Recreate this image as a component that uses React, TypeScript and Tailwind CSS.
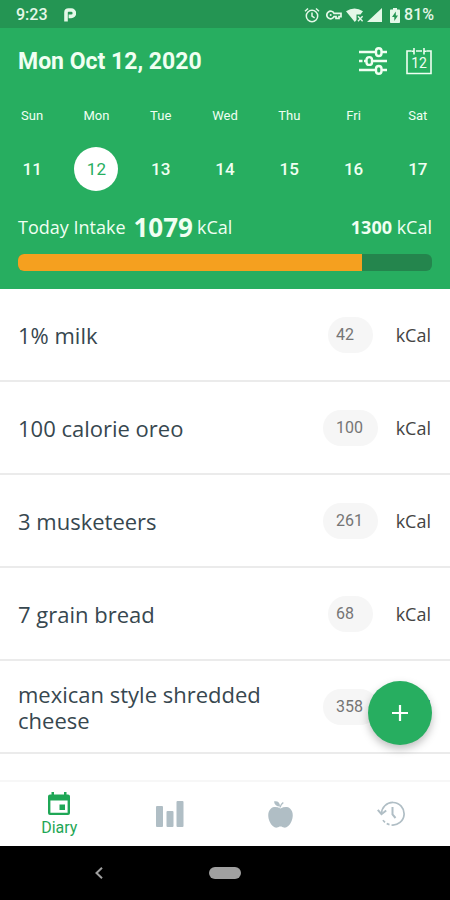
import React from "react";

const week = [
  { day: "Sun", date: 11 },
  { day: "Mon", date: 12 },
  { day: "Tue", date: 13 },
  { day: "Wed", date: 14 },
  { day: "Thu", date: 15 },
  { day: "Fri", date: 16 },
  { day: "Sat", date: 17 },
];

const foods = [
  { name: "1% milk", kcal: 42 },
  { name: "100 calorie oreo", kcal: 100 },
  { name: "3 musketeers", kcal: 261 },
  { name: "7 grain bread", kcal: 68 },
  { name: "mexican style shredded cheese", kcal: 358 },
];

function StatusBar() {
  return (
    <div className="flex h-7 items-center bg-[#249553] px-4 pt-0.5 text-base font-medium text-[#e4f8e8]">
      <span>9:23</span>
      <svg className="ml-4" width="12" height="14" viewBox="0 0 12 14" fill="none" stroke="currentColor">
        <path d="M2 13.5V4.5Q2 2 4.5 2H7.2a3 3 0 0 1 0 6.4H4.6" strokeWidth="3.6" />
      </svg>
      <div className="ml-auto flex items-center">
        <svg width="16" height="16" viewBox="0 0 16 16" fill="none" stroke="currentColor" strokeWidth="1.5">
          <circle cx="8" cy="9" r="5.7" />
          <path d="M8 5.5V9.2l2.6 1.6M1 4.2l3-2.7M15 4.2l-3-2.7" />
        </svg>
        <svg className="ml-1.5" width="16" height="10" viewBox="0 0 16 10" fill="none" stroke="currentColor" strokeWidth="1.7">
          <path d="M8 3.3A3.8 3.8 0 1 0 8 6.7h2v1.7h3V6.7h2V3.3z" />
          <circle cx="4.7" cy="5" r="1" fill="currentColor" stroke="none" />
        </svg>
        <svg className="ml-1" width="19" height="15" viewBox="0 0 19 15">
          <path d="M0 3.2Q8.5-2 17 3.2L14.5 6.5H10.5V12L8.8 14z" fill="currentColor" />
          <path d="M12 8.2l4.6 5M16.6 8.2l-4.6 5" stroke="currentColor" strokeWidth="1.4" />
        </svg>
        <svg className="ml-0.5" width="15" height="14" viewBox="0 0 15 14" fill="currentColor">
          <path d="M15 0v14H0z" />
        </svg>
        <svg className="ml-2" width="10" height="15" viewBox="0 0 10 15">
          <path d="M3 0h4v1.6h2.2q.8 0 .8.8v11.8q0 .8-.8.8H.8q-.8 0-.8-.8V2.4q0-.8.8-.8H3z" fill="currentColor" />
          <path d="M5.800 3.5L2 9h2.300v4L8 7.5H5.800z" fill="#249553" />
        </svg>
        <span className="ml-1">81%</span>
      </div>
    </div>
  );
}

function SlidersIcon() {
  return (
    <svg width="28" height="28" viewBox="0 0 28 28" fill="none" stroke="currentColor" strokeWidth="2.4">
      <path d="M0 5h16.500M23 5h5M0 14h3.500M5 14h2M14 14h14M0 23h16.500M23 23h5" />
      <rect x="17" y="1.2" width="5.500" height="7.800" rx="2.700" />
      <rect x="7.500" y="10.100" width="5.500" height="7.800" rx="2.700" />
      <rect x="17" y="19" width="5.500" height="7.800" rx="2.700" />
    </svg>
  );
}

function CalendarButton() {
  return (
    <button type="button" aria-label="Pick a date" className="relative h-7 w-[26px]">
      <svg width="26" height="28" viewBox="0 0 26 28" fill="none" stroke="currentColor" strokeWidth="1.600">
        <path d="M5.500 4H1v22.500h24V4h-4.500M10 4h6" />
        <path d="M8 1v6.500M18 1v6.500M5.500 4.200H8M18 4.200h2.500" />
      </svg>
      <span className="absolute inset-x-0 top-2 text-center text-sm leading-4">12</span>
    </button>
  );
}

function Header() {
  return (
    <header className="bg-[#27ae60] pb-[18px] text-[#f0fff2]">
      <div className="flex h-[66px] items-center px-[18px]">
        <h1 className="pt-0.5 text-[23px] font-bold">Mon Oct 12, 2020</h1>
        <button type="button" aria-label="Filters" className="mr-[19px] ml-auto">
          <SlidersIcon />
        </button>
        <CalendarButton />
      </div>
      <div className="grid grid-cols-7 pt-3">
        {week.map((d) => (
          <button key={d.day} type="button" className="flex flex-col items-center">
            <span className="text-[13px] leading-5">{d.day}</span>
            <span
              className={
                d.date === 12
                  ? "mt-[21px] flex size-11 items-center justify-center rounded-full bg-white pt-0.5 text-[17px] text-[#27ae60]"
                  : "mt-[21px] flex size-11 items-center justify-center pt-0.5 text-[17px] font-medium"
              }
            >
              {d.date}
            </span>
          </button>
        ))}
      </div>
      <div className="mt-[18px] flex h-9 items-center px-[18px] font-['Open_Sans',sans-serif] text-lg leading-9">
        <span>Today Intake</span>
        <strong className="ml-2 text-[26px]">1079</strong>
        <span className="ml-1">kCal</span>
        <span className="ml-auto">
          <strong>1300</strong> kCal
        </span>
      </div>
      <div className="mx-[18px] mt-[9px] h-[17px] overflow-hidden rounded-md bg-[#24854d]">
        <div className="h-full bg-[#f5a01f]" style={{ width: `${(1079 / 1300) * 100}%` }} />
      </div>
    </header>
  );
}

function FoodRow({ name, kcal }: { name: string; kcal: number }) {
  const id = `kcal-${kcal}`;
  return (
    <li className="flex h-[93px] items-center border-b-2 border-[#ebebeb] px-[18px]">
      <label htmlFor={id} className="flex-1 pr-12 text-[22px] leading-[26px] text-[#37474f]">
        {name}
      </label>
      <div className="flex w-[55px] justify-center">
        <input
          id={id}
          defaultValue={kcal}
          inputMode="numeric"
          className={
            kcal < 100
              ? "h-9 w-[45px] rounded-full bg-[#f6f6f6] pl-2 font-[Roboto,sans-serif] text-base text-[#757575]"
              : "h-9 w-[55px] rounded-full bg-[#f6f6f6] pl-[13px] font-[Roboto,sans-serif] text-base text-[#757575]"
          }
        />
      </div>
      <span className="w-[54px] pr-px text-right text-lg text-[#444]">kCal</span>
    </li>
  );
}

function TabBar() {
  return (
    <nav className="relative grid h-[66px] grid-cols-4 border-t-2 border-[#f7f7f7] bg-white px-1 text-[#b0bec5]">
      <button type="button" className="flex flex-col items-center pt-2.5 text-[#1fa756]">
        <svg width="22" height="24" viewBox="0 0 22 24">
          <path
            fillRule="evenodd"
            fill="currentColor"
            d="M3.500 0H6v2.500h10V0h2.500v2.500H20q2 0 2 2V21q0 2-2 2H2q-2 0-2-2V4.500q0-2 2-2h1.500zM2.400 8.500v12.200h17.200V8.500zM11.500 12.500H17V18h-5.500z"
          />
        </svg>
        <span className="text-base leading-6">Diary</span>
      </button>
      <button type="button" aria-label="Statistics" className="flex items-center justify-center">
        <svg width="28" height="26" viewBox="0 0 28 26" fill="currentColor">
          <rect x="0" y="5" width="7" height="21" rx="1" />
          <rect x="10.500" y="10" width="7" height="16" rx="1" />
          <rect x="20.500" y="0" width="7" height="26" rx="1" />
        </svg>
      </button>
      <button type="button" aria-label="Foods" className="flex items-center justify-center">
        <svg width="25" height="27" viewBox="0 0 25 27" fill="currentColor">
          <path d="M12.500 7.500C9 5.800 5.500 5.500 3 7.500C-.5 10.500-.3 16 1.600 20.500C3.500 25 6.500 27 9 26.600C10.500 26.300 11 25.600 12.500 25.600S14.500 26.300 16 26.600C18.500 27 21.500 25 23.400 20.500C25.300 16 25.500 10.500 22 7.500C19.500 5.500 16 5.800 12.500 7.500Z" />
          <path d="M6 .5C9.500-.3 12 1.500 12 5.500C8.500 5.500 6.500 4 6 .5Z" />
          <path d="M12 6.500Q12.500 3.500 15.300 1.500" fill="none" stroke="currentColor" strokeWidth="1.500" />
        </svg>
      </button>
      <button type="button" aria-label="History" className="flex items-center justify-center">
        <svg width="28" height="26" viewBox="0 0 28 26" fill="none" stroke="currentColor" strokeWidth="1.700">
          <path d="M4.500 13A11.300 11.300 0 1 1 14.500 24" />
          <path d="M12.500 23.600A11.300 11.300 0 0 1 5 17.500" strokeDasharray="3 2" />
          <path d="M.8 8.800L4.500 13.200L9.200 9.500" strokeWidth="2" />
          <path d="M15.500 6v7.500l3 3.500" strokeWidth="2" />
        </svg>
      </button>
    </nav>
  );
}

function SystemBar() {
  return (
    <div className="grid h-[54px] grid-cols-[1fr_32px_1fr] items-center bg-black text-[#a0a0a0]">
      <button type="button" aria-label="Back" className="flex justify-center pr-3">
        <svg width="8" height="12" viewBox="0 0 8 12" fill="none" stroke="currentColor" strokeWidth="2">
          <path d="M7 .8L1.500 6L7 11.200" />
        </svg>
      </button>
      <button type="button" aria-label="Home" className="h-3 w-8 rounded-full bg-[#a0a0a0]" />
    </div>
  );
}

export default function App() {
  return (
    <div className="flex min-h-screen flex-col bg-white font-[Roboto,sans-serif]">
      <StatusBar />
      <Header />
      <main className="relative flex-1 font-['Open_Sans',sans-serif]">
        <ul>
          {foods.map((f) => (
            <FoodRow key={f.name} name={f.name} kcal={f.kcal} />
          ))}
        </ul>
        <button
          type="button"
          aria-label="Add food"
          className="absolute right-[18px] bottom-[35px] flex size-16 items-center justify-center rounded-full bg-[#27ae60] text-white shadow-[0_4px_8px_rgba(0,0,0,0.25)]"
        >
          <svg width="16" height="16" viewBox="0 0 16 16" stroke="currentColor" strokeWidth="2.200">
            <path d="M8 0v16M0 8h16" />
          </svg>
        </button>
      </main>
      <TabBar />
      <SystemBar />
    </div>
  );
}
